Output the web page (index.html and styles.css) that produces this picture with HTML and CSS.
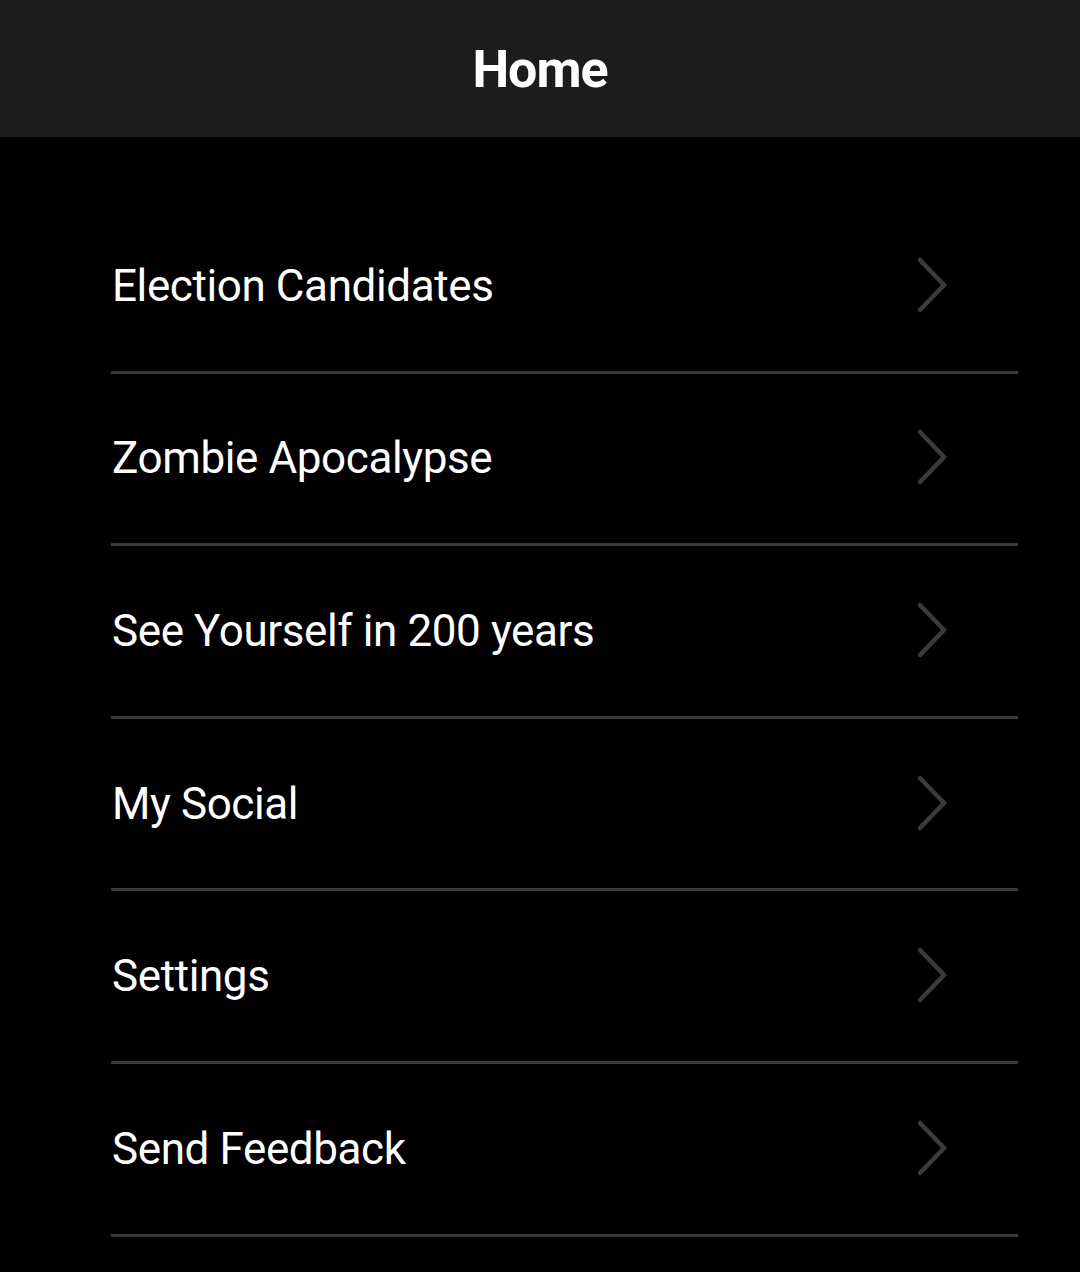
FILE: index.html
```html
<!DOCTYPE html>
<html>
<head>
<meta charset="utf-8">
<link rel="stylesheet" href="styles.css">
</head>
<body>
<header class="topbar"><h1 class="title">Home</h1></header>
<ul class="menu">
  <li class="row"><span class="label">Election Candidates</span><svg class="chev" width="40" height="60" viewBox="0 0 40 60"><polyline points="10,5 34,30 10,55"/></svg></li>
  <li class="row"><span class="label">Zombie Apocalypse</span><svg class="chev" width="40" height="60" viewBox="0 0 40 60"><polyline points="10,5 34,30 10,55"/></svg></li>
  <li class="row"><span class="label">See Yourself in 200 years</span><svg class="chev" width="40" height="60" viewBox="0 0 40 60"><polyline points="10,5 34,30 10,55"/></svg></li>
  <li class="row"><span class="label">My Social</span><svg class="chev" width="40" height="60" viewBox="0 0 40 60"><polyline points="10,5 34,30 10,55"/></svg></li>
  <li class="row"><span class="label">Settings</span><svg class="chev" width="40" height="60" viewBox="0 0 40 60"><polyline points="10,5 34,30 10,55"/></svg></li>
  <li class="row"><span class="label">Send Feedback</span><svg class="chev" width="40" height="60" viewBox="0 0 40 60"><polyline points="10,5 34,30 10,55"/></svg></li>
</ul>
</body>
</html>
```
FILE: styles.css
```css
html, body {
  margin: 0;
  padding: 0;
  background: #000;
  height: 1272px;
  overflow: hidden;
}
body {
  font-family: Roboto, "Liberation Sans", sans-serif;
  color: #fff;
}
.topbar {
  height: 137px;
  background: #1c1c1c;
  display: flex;
  align-items: center;
  justify-content: center;
}
.title {
  margin: 0;
  font-family: Roboto, "Liberation Sans", sans-serif;
  font-weight: 700;
  font-size: 52px;
  letter-spacing: -1px;
  line-height: 1;
  padding-top: 3px;
}
.menu {
  list-style: none;
  margin: 64px 62px 0 111px;
  padding: 0;
}
.row {
  box-sizing: border-box;
  height: 172.6px;
  border-bottom: 3px solid #3a3a3a;
  display: flex;
  align-items: center;
  justify-content: space-between;
  padding: 0 68px 0 1px;
}
.label {
  font-size: 44px;
  letter-spacing: -0.4px;
  line-height: 1;
  font-weight: 400;
}
.chev {
  display: block;
  margin-top: -2px;
}
.chev polyline {
  fill: none;
  stroke: #3a3a3a;
  stroke-width: 4.5;
  stroke-linecap: round;
  stroke-linejoin: miter;
}
```
